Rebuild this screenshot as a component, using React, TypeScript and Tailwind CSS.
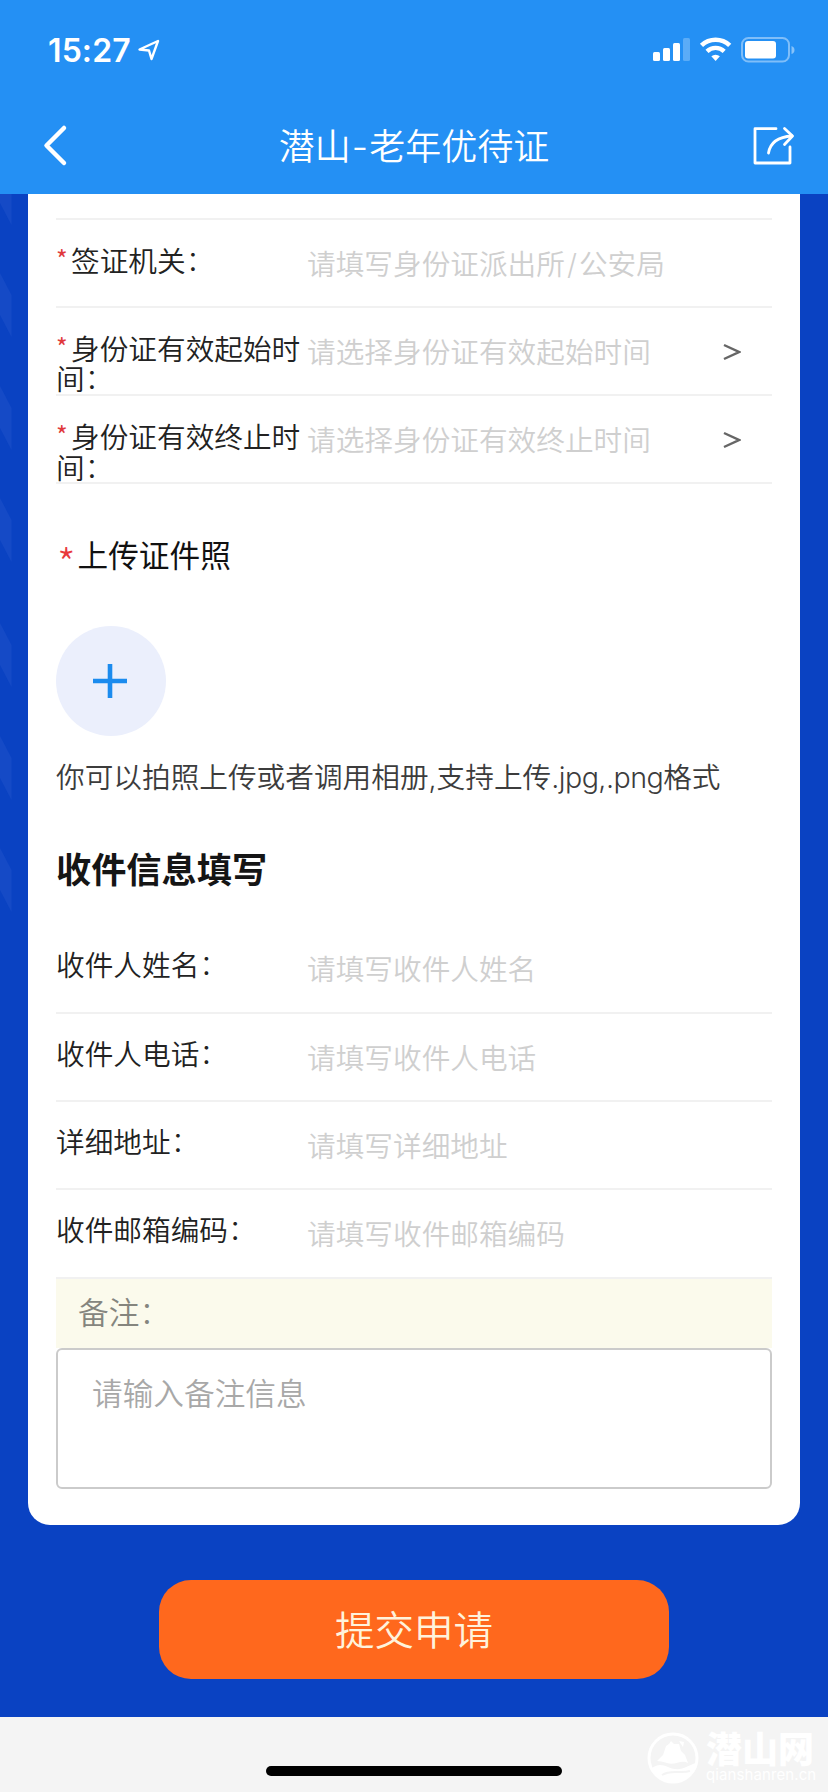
import type { ReactNode } from "react";

interface FormRowProps {
  label: string;
  placeholder: ReactNode;
  required?: boolean;
  select?: boolean;
}

function Colon() {
  return <span className="inline-block -translate-y-px font-light">：</span>;
}

function FormRow({ label, placeholder, required, select }: FormRowProps) {
  return (
    <div className="flex h-[88.3px] border-b-2 border-[#f1f1f1]">
      <div className="w-[251px] flex-shrink-0 pt-[26px] text-[28.67px] font-[350] leading-[30.5px] text-[#222] whitespace-nowrap">
        {required && (
          <span className="inline-block w-[15px] align-[3px] font-['Noto_Sans_CJK_SC'] text-[25px] font-normal leading-none text-[#e0393c]">
            *
          </span>
        )}
        {label.length > 8 ? (
          <>
            {label.slice(0, 8)}
            <span className="block h-[30px] leading-[29px]">
              {label.slice(8)}
              <Colon />
            </span>
          </>
        ) : (
          <>
            {label}
            <Colon />
          </>
        )}
      </div>
      <span className="flex-1 pt-[29px] text-[28.67px] font-[350] leading-[31px] text-[#cfcfcf] whitespace-nowrap">
        {placeholder}
      </span>
      {select && (
        <svg className="mt-[35px] mr-[31px] h-[18px] w-[18px]" viewBox="0 0 18 18" fill="none" stroke="#666" strokeWidth="2.4">
          <path d="M1 2 L16 9 L1 16" />
        </svg>
      )}
    </div>
  );
}

function StatusBar() {
  return (
    <div className="flex h-[87px] items-start pl-12 pt-[33px] text-white">
      <span className="w-[90px] pt-px text-[32px] font-semibold leading-[34px] tracking-[0.1px]">15:27</span>
      <svg className="mt-[6px] h-[22px] w-[22px]" viewBox="0 0 22 22" fill="none" stroke="white" strokeWidth="2.4" strokeLinejoin="round">
        <path d="M1.5 10.5 L20 2 L13.5 20 L11 11.5 Z" />
      </svg>
      <svg className="ml-auto mr-[33px] mt-1 h-[26px] w-[142px]" viewBox="0 0 142 26" fill="white">
        {/* Signal */}
        <rect x="0" y="15" width="7" height="9" rx="1.5" />
        <rect x="10" y="11" width="7" height="13" rx="1.5" />
        <rect x="20" y="6" width="7" height="18" rx="1.5" />
        <rect x="30" y="1" width="7" height="23" rx="1.5" opacity="0.25" />
        {/* Wifi */}
        <g fill="none" stroke="white">
          <path d="M48.5 8.4 A20.5 20.5 0 0 1 76.7 8.4" strokeWidth="4.6" />
          <path d="M54 14.3 A12.5 12.5 0 0 1 71.2 14.3" strokeWidth="4.4" />
        </g>
        <path d="M58.3 19.3 A6.5 6.5 0 0 1 66.9 19.3 L62.6 24 Z" />
        {/* Battery */}
        <rect x="89" y="1" width="47" height="23.5" rx="6.5" fill="none" stroke="white" strokeWidth="2" opacity="0.42" />
        <rect x="92" y="4" width="31" height="17.5" rx="3" />
        <path d="M138.5 9 Q141.5 10 141.5 13 Q141.5 16 138.5 17 Z" opacity="0.45" />
      </svg>
    </div>
  );
}

function NavBar() {
  return (
    <div className="flex h-[107px] items-start justify-between pl-[38px] pr-[32px] text-white">
      <svg className="mt-[36px] h-11 w-[45px]" viewBox="-2 0 45 44" fill="none" stroke="white" strokeWidth="4.5" strokeLinecap="round" strokeLinejoin="round">
        <path d="M24 5 L6.5 22.5 L24 40" />
      </svg>
      <h1 className="-ml-[6px] mt-[40px] text-[36px] font-[350] leading-[40px] whitespace-nowrap">
        潜山<span className="px-px">-</span>老年优待证
      </h1>
      <svg className="mt-[38px] h-[42px] w-[45px]" viewBox="750 125 45 42" fill="none" stroke="white" strokeWidth="2.8" strokeLinecap="round" strokeLinejoin="round">
        <path d="M775 128.7 H754 V163 H789 V147" />
        <path d="M767.5 153 C769 144 775 137 791 136" />
        <path d="M783.5 128.5 L791.5 136 L783.5 144.5" />
      </svg>
    </div>
  );
}

// Faint arrow pattern down the left side of the page
function SideStripe() {
  return (
    <svg className="h-[760px] w-7 flex-shrink-0" viewBox="0 0 28 760" fill="#154ac6">
      {[31, 143, 256, 368, 493, 606, 718].map((y) => (
        <path key={y} d={`M0 ${y - 64} L11.5 ${y - 42} V${y} L0 ${y - 22} Z`} />
      ))}
    </svg>
  );
}

function Watermark({ children }: { children: ReactNode }) {
  return (
    <div className="absolute left-[647px] top-[15px] flex text-white">
      <svg className="h-[52px] w-[52px]" viewBox="0 0 52 52">
        <circle cx="26" cy="26" r="24" fill="none" stroke="white" strokeWidth="3" />
        <path d="M10 29 L16 23 L19 14 L22 12 L24 9 L27 12 L32 12 L34 19 L38 23 L41 31 C34 27 28 34 20 31 Q14 29 10 29 Z" fill="white" />
        <path d="M32 9 L37 10 L36 15 Z" fill="white" />
        <path d="M5 36 C14 29 20 36 28 37 C36 38 42 33 49 31 C46 45 36 51 25 50 C14 49 7 43 5 36 Z" fill="white" />
        <path d="M15 43 C24 37 33 42 43 39" fill="none" stroke="#f4f4f4" strokeWidth="2" />
      </svg>
      {children}
    </div>
  );
}

export default function App() {
  return (
    <div className="flex h-[1792px] w-[828px] flex-col overflow-hidden bg-[#f4f4f4] font-['Inter','Noto_Sans_CJK_SC',sans-serif]">
      <header className="h-[194px] flex-shrink-0 bg-[#2490f4]">
        <StatusBar />
        <NavBar />
      </header>

      <main className="h-[1523px] flex-shrink-0 bg-[#0a42c2]">
        <div className="flex">
          <SideStripe />
          <section className="h-[1331px] w-[772px] rounded-b-[22px] bg-white px-7">
            <div className="h-[25.5px] border-b-2 border-[#f1f1f1]" />
            <FormRow
              required
              label="签证机关"
              placeholder={
                <>
                  请填写身份证派出所<span className="px-[2px]">/</span>公安局
                </>
              }
            />
            <FormRow required select label="身份证有效起始时间" placeholder="请选择身份证有效起始时间" />
            <FormRow required select label="身份证有效终止时间" placeholder="请选择身份证有效终止时间" />

            {/* Upload */}
            <div className="mt-[52px] flex h-10 items-center pl-px text-[30.67px] leading-10 text-[#111]">
              <span className="w-[20.5px] pt-[12px] font-['Noto_Sans_CJK_SC'] text-[42px] font-light text-[#e8393c]">*</span>
              上传证件照
            </div>
            <div className="mt-[50px] flex h-[110px] w-[110px] items-center justify-center rounded-full bg-[#ebeffc]">
              <svg className="mr-[3px] h-[34px] w-[34px]" viewBox="0 0 34 34" stroke="#1b8bee" strokeWidth="4.6">
                <path d="M17 0 V34 M0 17 H34" />
              </svg>
            </div>
            <p className="mt-[22px] text-[28.67px] font-[350] leading-10 text-[#3c3c3c] whitespace-nowrap">
              你可以拍照上传或者调用相册,支持上传<span className="tracking-[-0.55px]">.jpg,.png</span>格式
            </p>

            {/* Recipient */}
            <h2 className="mt-[52px] text-[35.2px] font-bold leading-10 text-[#151515]">收件信息填写</h2>
            <div className="mt-[35px]">
              <FormRow label="收件人姓名" placeholder="请填写收件人姓名" />
              <FormRow label="收件人电话" placeholder="请填写收件人电话" />
              <FormRow label="详细地址" placeholder="请填写详细地址" />
              <FormRow label="收件邮箱编码" placeholder="请填写收件邮箱编码" />
            </div>

            {/* Remark */}
            <div className="h-[69px] bg-[#fbfaec] pl-[22px] pt-[14px] text-[30.67px] font-[350] leading-10 text-[#85857e]">
              备注
              <Colon />
            </div>
            <div className="h-[141px] rounded-md border-2 border-[#cbcbcb] bg-white pl-[34px] pt-[24px] text-[30.67px] font-[350] leading-10 text-[#a8a8a8]">
              请输入备注信息
            </div>
          </section>
        </div>
        <button className="mx-auto mt-[55px] block h-[99px] w-[510px] rounded-[32px] bg-[#ff681d] pt-[3px] text-[39.5px] font-[350] leading-[96px] text-[#fff3dc]">
          提交申请
        </button>
      </main>

      <footer className="relative h-[75px] bg-[#f4f4f4]">
        <div className="mx-auto mt-[49px] h-[10px] w-[296px] rounded-full bg-black" />
        <Watermark>
          <div className="ml-[7px] flex flex-col">
            <span className="pt-px text-[36px] font-black leading-[34px]">潜山网</span>
            <span className="text-[15px] leading-[15px] tracking-[0.1px]">qianshanren.cn</span>
          </div>
        </Watermark>
      </footer>
    </div>
  );
}
